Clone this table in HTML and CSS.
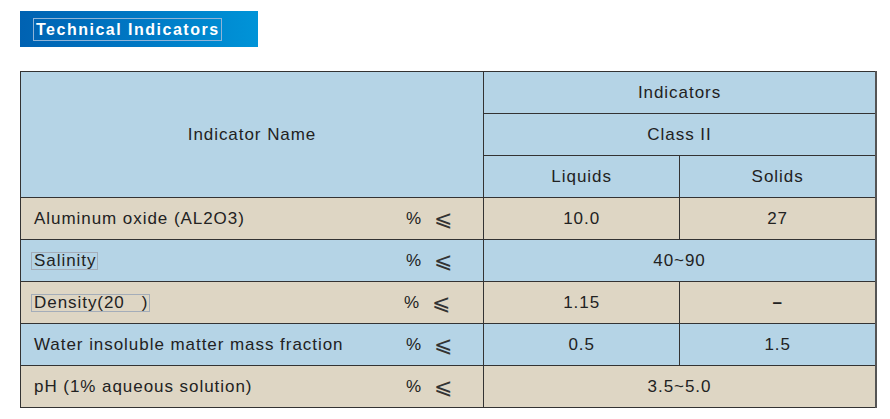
FILE: index.html
```html
<!DOCTYPE html>
<html>
<head>
<meta charset="utf-8">
<link rel="stylesheet" href="styles.css">
</head>
<body>
<div class="page">
  <div class="banner"><span class="banner-title">Technical Indicators</span></div>
  <table class="spec">
    <tr class="blue">
      <td class="name-head" rowspan="3">Indicator Name</td>
      <td colspan="2">Indicators</td>
    </tr>
    <tr class="blue"><td colspan="2">Class II</td></tr>
    <tr class="blue"><td>Liquids</td><td>Solids</td></tr>
    <tr class="beige">
      <td class="name"><div class="nrow"><span class="label">Aluminum oxide (AL2O3)</span><span class="unit">%<span class="le">⩽</span></span></div></td>
      <td>10.0</td><td>27</td>
    </tr>
    <tr class="blue">
      <td class="name"><div class="nrow"><span class="label boxed">Salinity</span><span class="unit">%<span class="le">⩽</span></span></div></td>
      <td colspan="2">40~90</td>
    </tr>
    <tr class="beige">
      <td class="name"><div class="nrow"><span class="label boxed">Density(20&nbsp;&nbsp;&nbsp;)</span><span class="unit shift">%<span class="le">⩽</span></span></div></td>
      <td>1.15</td><td class="dash">–</td>
    </tr>
    <tr class="blue">
      <td class="name"><div class="nrow"><span class="label">Water insoluble matter mass fraction</span><span class="unit">%<span class="le">⩽</span></span></div></td>
      <td>0.5</td><td>1.5</td>
    </tr>
    <tr class="beige">
      <td class="name"><div class="nrow"><span class="label">pH (1% aqueous solution)</span><span class="unit">%<span class="le">⩽</span></span></div></td>
      <td colspan="2">3.5~5.0</td>
    </tr>
  </table>
</div>
</body>
</html>
```
FILE: styles.css
```css
html, body {
  margin: 0;
  padding: 0;
  background: #ffffff;
}
.page {
  padding: 11px 0 0 20px;
  font-family: "Liberation Sans", Arial, sans-serif;
}
.banner {
  width: 238px;
  height: 36px;
  background: linear-gradient(90deg, #0062b2 0%, #0078c4 50%, #0094d8 100%);
  display: flex;
  align-items: center;
  padding-left: 13px;
  box-sizing: border-box;
}
.banner-title {
  color: #ffffff;
  font-weight: bold;
  font-size: 16px;
  letter-spacing: 1.5px;
  line-height: 19px;
  padding: 1px 1px 1px 2px;
  border: 1px solid #8fb4d8;
}
.spec {
  margin-top: 24px;
  border-collapse: collapse;
  width: 857px;
  table-layout: fixed;
  font-size: 17px;
  letter-spacing: 0.95px;
  color: #222222;
}
.spec td {
  border: 1px solid #333333;
  height: 41px;
  padding: 0;
  text-align: center;
  vertical-align: middle;
}
.spec tr td:first-child { width: 462px; }
.spec tr:nth-child(3) td:first-child { width: 198px; }
.spec td:last-child { border-right: 2px solid #555; }
.blue td { background: #b5d4e6; }
.beige td { background: #ded6c4; }
.spec .name { text-align: left; }
.nrow {
  display: flex;
  align-items: center;
  padding-left: 13px;
}
.label { flex: none; }
.unit {
  margin-left: auto;
  width: 77px;
  height: 22px;
  flex: none;
  display: flex;
  align-items: center;
}
.unit.shift { width: 79px; }
.le {
  font-family: "DejaVu Sans", sans-serif;
  font-size: 22px;
  line-height: 22px;
  margin-left: 12px;
  letter-spacing: 0;
  font-weight: 300;
  color: #333;
}
.boxed {
  margin-left: -3px;
  padding: 0 1px 0 2px;
  border: 1px solid #a4adb9;
  line-height: 16px;
}
.dash { font-weight: bold; }
```
